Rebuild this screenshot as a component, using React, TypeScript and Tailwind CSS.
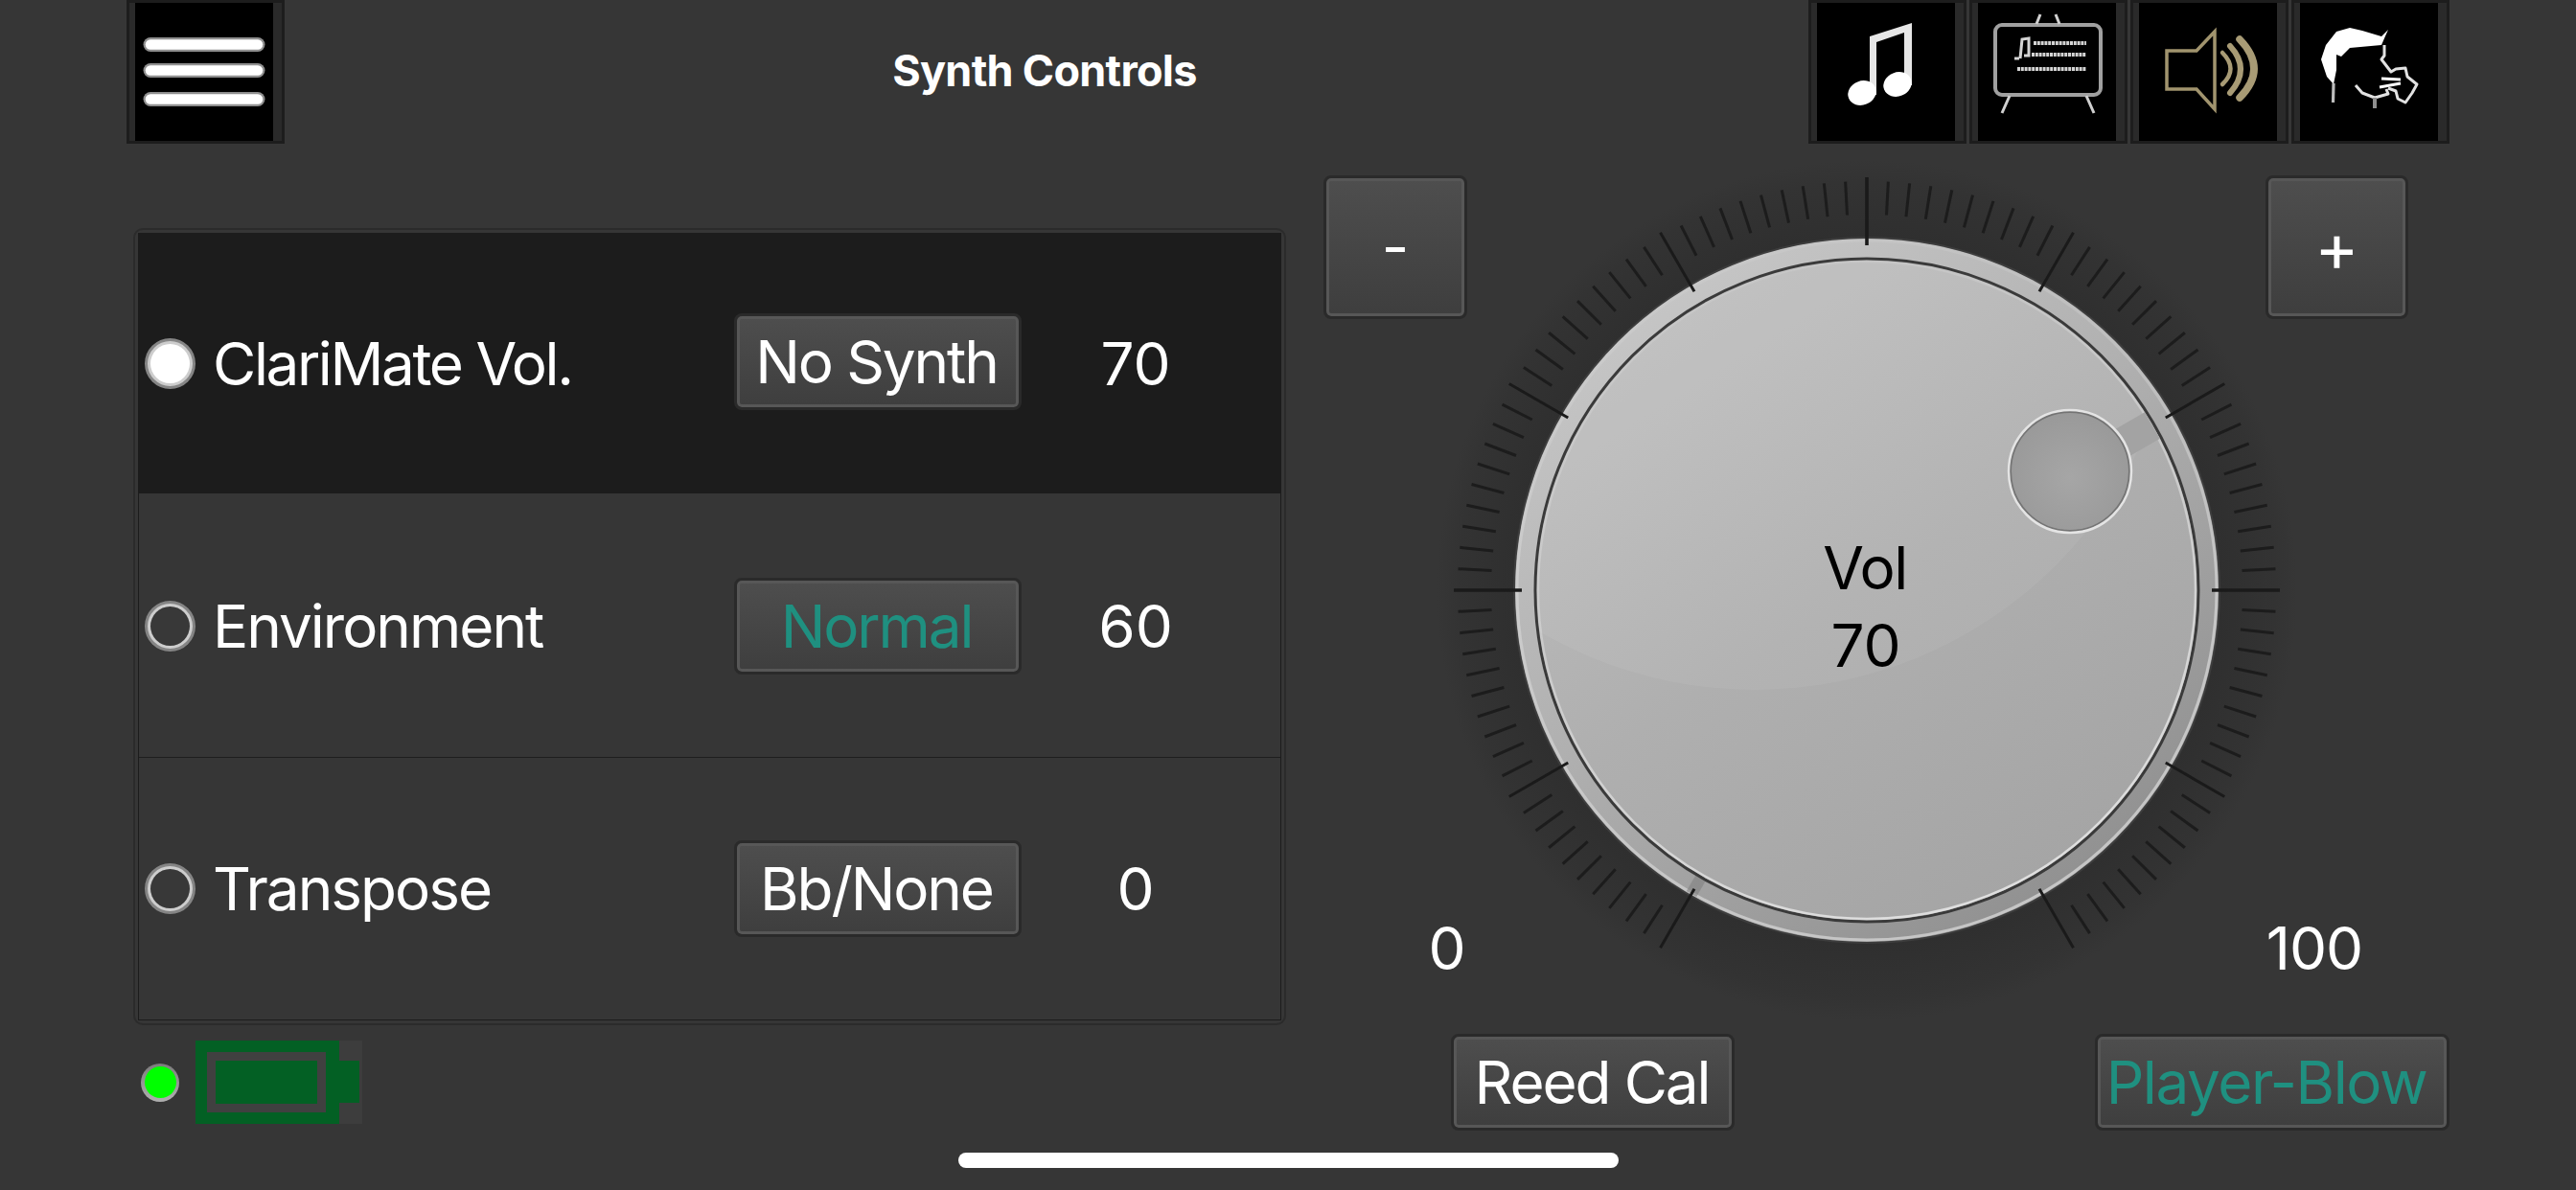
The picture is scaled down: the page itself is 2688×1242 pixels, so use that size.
import React from "react";

const font = "[font-family:Inter,'Noto_Sans',sans-serif]";

function IconFrame({ children }: { children: React.ReactNode }) {
  return (
    <div className="w-[165px] h-[150px] border-[3px] border-[#1d1d1d] bg-[#2a2a2a] pl-[6px] pr-[9px] shrink-0">
      <svg viewBox="0 0 144 144" className="block w-[144px] h-[144px] bg-black">
        {children}
      </svg>
    </div>
  );
}

function Btn({
  children,
  className,
  teal,
}: {
  children: React.ReactNode;
  className: string;
  teal?: boolean;
}) {
  return (
    <div
      className={
        "flex items-center justify-center rounded-[8px] border-[3px] border-[#2a2a2a] bg-linear-to-b from-[#4e4e4e] to-[#3e3e3e] shadow-[inset_0_0_0_3px_#575757] whitespace-nowrap " +
        (teal ? "text-[#1f9080] " : "text-white ") +
        className
      }
    >
      {children}
    </div>
  );
}

function Radio({ on }: { on?: boolean }) {
  return (
    <div className="w-[53px] h-[53px] rounded-full bg-[#858585] flex items-center justify-center shrink-0">
      <div className="w-[47px] h-[47px] rounded-full bg-[#cdcdcd] flex items-center justify-center">
        <div
          className={
            "w-[41px] h-[41px] rounded-full " +
            (on ? "bg-white" : "bg-[#383838]")
          }
        />
      </div>
    </div>
  );
}

function Row({
  label,
  button,
  value,
  on,
  teal,
  className,
  btnClass,
  labelClass,
}: {
  label: string;
  button: string;
  value: string;
  on?: boolean;
  teal?: boolean;
  className: string;
  btnClass?: string;
  labelClass?: string;
}) {
  return (
    <div className={"flex items-center pl-[6px] " + className}>
      <Radio on={on} />
      <div className={"ml-[18px] w-[544px] whitespace-nowrap " + (labelClass ?? "tracking-[-2px]")}>{label}</div>
      <Btn className={"w-[300px] h-[101px] tracking-[-2.1px] pr-[3px] " + (btnClass ?? "")} teal={teal}>
        {button}
      </Btn>
      <div className="w-[238px] text-center">{value}</div>
    </div>
  );
}

function Dial() {
  const c = 450;
  const pt = (deg: number, r: number) => {
    const a = (deg * Math.PI) / 180;
    return [c + r * Math.sin(a), c - r * Math.cos(a)];
  };
  const ticks: React.ReactNode[] = [];
  for (let d = -150; d <= 150; d += 3) {
    const major = d % 30 === 0;
    if (major) continue;
    const [x1, y1] = pt(d, 392);
    const [x2, y2] = pt(d, 427);
    ticks.push(
      <line key={d} x1={x1} y1={y1} x2={x2} y2={y2} stroke="#1c1c1c" strokeWidth={3} />
    );
  }
  const majors: React.ReactNode[] = [];
  for (let d = -150; d <= 150; d += 30) {
    const [x1, y1] = pt(d, 360);
    const [x2, y2] = pt(d, 431);
    majors.push(
      <line
        key={d}
        x1={x1}
        y1={y1}
        x2={x2}
        y2={y2}
        stroke="#1a1a1a"
        strokeWidth={d % 90 === 0 ? 3.6 : 3}
      />
    );
  }
  const [g1x, g1y] = pt(60, 250);
  const [g2x, g2y] = pt(60, 344);
  const [s1x, s1y] = pt(-150, 346);
  const [s2x, s2y] = pt(-150, 366);
  return (
    <svg viewBox="0 0 900 900" className="block w-[900px] h-[900px]">
      <defs>
        <radialGradient id="halo" gradientUnits="userSpaceOnUse" cx="450" cy="450" r="449">
          <stop offset="0.82" stopColor="#2f2f2f" />
          <stop offset="0.95" stopColor="#333333" />
          <stop offset="1" stopColor="#363636" />
        </radialGradient>
        <linearGradient id="rim" x1="0.15" y1="0.05" x2="0.8" y2="0.98">
          <stop offset="0" stopColor="#c8c8c8" />
          <stop offset="0.45" stopColor="#b0b0b0" />
          <stop offset="1" stopColor="#8e8e8e" />
        </linearGradient>
        <linearGradient id="rimEdge" x1="0.5" y1="0" x2="0.5" y2="1">
          <stop offset="0" stopColor="#cfcfcf" stopOpacity="0.3" />
          <stop offset="0.5" stopColor="#d0d0d0" stopOpacity="0.8" />
          <stop offset="1" stopColor="#c6c6c6" />
        </linearGradient>
        <linearGradient id="face" x1="0.15" y1="0.05" x2="0.75" y2="1">
          <stop offset="0" stopColor="#c0c0c0" />
          <stop offset="0.5" stopColor="#afafaf" />
          <stop offset="1" stopColor="#a4a4a4" />
        </linearGradient>
        <linearGradient id="faceEdge" x1="0.3" y1="0" x2="0.7" y2="1">
          <stop offset="0" stopColor="#e6e6e6" stopOpacity="0.1" />
          <stop offset="0.55" stopColor="#e6e6e6" stopOpacity="0.55" />
          <stop offset="1" stopColor="#e0e0e0" />
        </linearGradient>
        <radialGradient id="ind" cx="0.5" cy="0.55" r="0.6">
          <stop offset="0" stopColor="#a6a6a6" />
          <stop offset="1" stopColor="#989898" />
        </radialGradient>
        <clipPath id="faceClip">
          <circle cx="450" cy="450" r="345" />
        </clipPath>
      </defs>
      <circle cx="450" cy="450" r="449" fill="url(#halo)" />
      {ticks}
      <circle cx="450" cy="450" r="369" fill="#3d3d3d" />
      <circle cx="450" cy="450" r="367" fill="url(#rim)" />
      <circle cx="450" cy="450" r="365" fill="none" stroke="url(#rimEdge)" strokeWidth={3} />
      <line x1={s1x} y1={s1y} x2={s2x} y2={s2y} stroke="#7d7d7d" strokeOpacity={0.55} strokeWidth={12} />
      <circle cx="450" cy="450" r="346" fill="url(#face)" stroke="#3a3a3a" strokeWidth={3} />
      <circle cx="450" cy="450" r="343" fill="none" stroke="url(#faceEdge)" strokeWidth={2.5} />
      <g clipPath="url(#faceClip)">
        <circle cx="333" cy="109" r="445" fill="#ffffff" fillOpacity={0.06} />
        <line x1={g1x} y1={g1y} x2={g2x} y2={g2y} stroke="#a3a3a3" strokeWidth={32} />
      </g>
      <circle cx="662" cy="326" r="62.5" fill="url(#ind)" stroke="#747474" strokeWidth={3} />
      <circle cx="662" cy="326" r="64" fill="none" stroke="#e4e4e4" strokeWidth={2.5} />
      {majors}
    </svg>
  );
}

export default function App() {
  return (
    <div className={"relative w-[2688px] h-[1242px] bg-[#363636] overflow-hidden flex flex-col text-[62px] leading-none text-white " + font}>
      <header className="flex items-center h-[150px] pl-[132px] pr-[132px] shrink-0">
        <IconFrame>
          {[43.5, 70.5, 100.5].map((y) => (
            <g key={y}>
              <line x1="16" x2="128" y1={y} y2={y} stroke="#8f8f8f" strokeWidth={15} strokeLinecap="round" />
              <line x1="16" x2="128" y1={y} y2={y} stroke="#ffffff" strokeWidth={10.5} strokeLinecap="round" />
            </g>
          ))}
        </IconFrame>
        <div className="flex-1 text-center text-[45px] font-bold tracking-[-0.7px] pr-[4px] pb-[3px]">Synth Controls</div>
        <div className="flex gap-[3px]">
          <IconFrame>
            <path d="M55 35 L99 21 V86 H91 V31 L62 41 V96 H55 Z" fill="#e6e6e6" />
            <ellipse cx="47" cy="94" rx="15" ry="12.5" fill="#fff" transform="rotate(-22 47 94)" />
            <ellipse cx="84" cy="85" rx="15" ry="12.5" fill="#fff" transform="rotate(-22 84 85)" />
          </IconFrame>
          <IconFrame>
            <rect x="18" y="23" width="110" height="73" rx="7" fill="none" stroke="#a0a0a0" strokeWidth={4} />
            <g stroke="#d0d0d0" fill="none">
              <path d="M65 12 L61 22 M81 12 L85 22" strokeWidth={3} />
              <path d="M33 97 L25 115 M113 97 L121 115" strokeWidth={3} />
            </g>
            <g stroke="#d4d4d4" fill="none" strokeWidth={4} strokeDasharray="3 0.8">
              <path d="M58 42 H113 M56 54 H113 M41 69 H113" />
            </g>
            <path d="M38 58 L43 58 M44 58 L46 38 L53 37 V55 H48" stroke="#d4d4d4" strokeWidth={3} fill="none" />
          </IconFrame>
          <IconFrame>
            <path d="M29 50 H60 L79 30 V111 L60 90 H29 Z" fill="none" stroke="#a1946e" strokeWidth={3.5} />
            <g fill="none" stroke="#a89b75" strokeLinecap="round">
              <path d="M87 52 Q104 69 87 85" strokeWidth={4.5} />
              <path d="M95 45 Q117 69 95 94" strokeWidth={6} />
              <path d="M105 38 Q135 69 105 99" strokeWidth={7.5} />
            </g>
          </IconFrame>
          <IconFrame>
            <path
              d="M92 28 L85 35 L65 29 L52 26 L38 30 L27 44 L22 59 L28 77 L35 85 L38 70 L38 54 L43 56 L52 47 L85 44 L88 37 Z"
              fill="#fff"
            />
            <g fill="none" stroke="#e2e2e2" strokeWidth={3} strokeLinejoin="round">
              <path d="M35 84 L34.5 104" strokeWidth={3.2} stroke="#bdbdbd" />
              <path d="M88 44 L88 55 L85 59 L95 72 L100 69 L110 68 L112 77 L122 85 L117 94 L110 104 L102 100 L100 92 L92 89" />
              <path d="M85 79 L105 80 M83 88 L105 84" strokeWidth={3} stroke="#fff" />
              <path d="M58 86 L65 94 L78 99 L92 95 L90 90" />
              <path d="M78 99 L78 110" stroke="#8f8f8f" strokeWidth={4} />
            </g>
          </IconFrame>
        </div>
      </header>

      <main className="flex flex-1 pl-[139px]">
        <section className="w-[1203px] pt-[88px] flex flex-col">
          <div className="h-[832px] rounded-[10px] border-2 border-[#2b2b2b] p-[3px]">
            <div className="h-full border border-[#1c1c1c] flex flex-col">
              <Row className="h-[271px] bg-[#1c1c1c]" btnClass="mb-[4px]" labelClass="tracking-[-2.4px]" label="ClariMate Vol." button="No Synth" value="70" on />
              <Row className="h-[276px] pt-[2px] border-b border-[#1e1e1e]" label="Environment" button="Normal" value="60" teal />
              <Row className="flex-1" label="Transpose" button="Bb/None" value="0" />
            </div>
          </div>
          <div className="flex items-center mt-[16px] pl-[8px] h-[87px]">
            <div className="w-[40px] h-[40px] rounded-full bg-linear-to-b from-[#7c7c7c] to-[#b0b0b0] flex items-center justify-center">
              <div className="w-[33px] h-[33px] rounded-full bg-[#00ff00]" />
            </div>
            <div className="ml-[17px] flex h-[87px]">
              <div className="w-[150px] h-full bg-[#036024] pl-[12px] pt-[12px]">
                <div className="w-[124px] h-[63px] border-[9px] border-[#404040] bg-[#036024]" />
              </div>
              <div className="w-[24px] h-full bg-[#3d3d3d] pt-[21px]">
                <div className="w-[21px] h-[44px] bg-[#036024]" />
              </div>
            </div>
          </div>
        </section>

        <section className="w-[1174px] ml-[40px] flex flex-col">
          <div className="relative h-[929px] pt-[16px] pl-[116px]">
            <div className="relative w-[900px] h-[900px]">
              <Dial />
              <div className="absolute left-0 right-0 top-[386px] flex flex-col items-center text-black leading-[81px]">
                <div className="tracking-[-1.5px] pr-[4px]">Vol</div>
                <div className="pr-[2px]">70</div>
              </div>
            </div>
            <Btn className="absolute left-[-1px] top-[33px] w-[150px] h-[150px] text-[62px]">-</Btn>
            <Btn className="absolute left-[982px] top-[33px] w-[149px] h-[150px] text-[70px]">+</Btn>
            <div className="absolute left-[128px] top-[809px] -translate-x-1/2">0</div>
            <div className="absolute left-[1033px] top-[809px] -translate-x-1/2 tracking-[-1px]">100</div>
          </div>
          <div className="flex justify-between pl-[132px]">
            <Btn className="w-[296px] h-[101px] tracking-[-2.1px] pr-[2px]">Reed Cal</Btn>
            <Btn className="w-[370px] h-[101px] tracking-[-1.4px] pr-[12px]" teal>
              Player-Blow
            </Btn>
          </div>
        </section>
      </main>

      <div className="flex justify-center h-[39px] shrink-0">
        <div className="w-[689px] h-[16px] rounded-full bg-white" />
      </div>
    </div>
  );
}
